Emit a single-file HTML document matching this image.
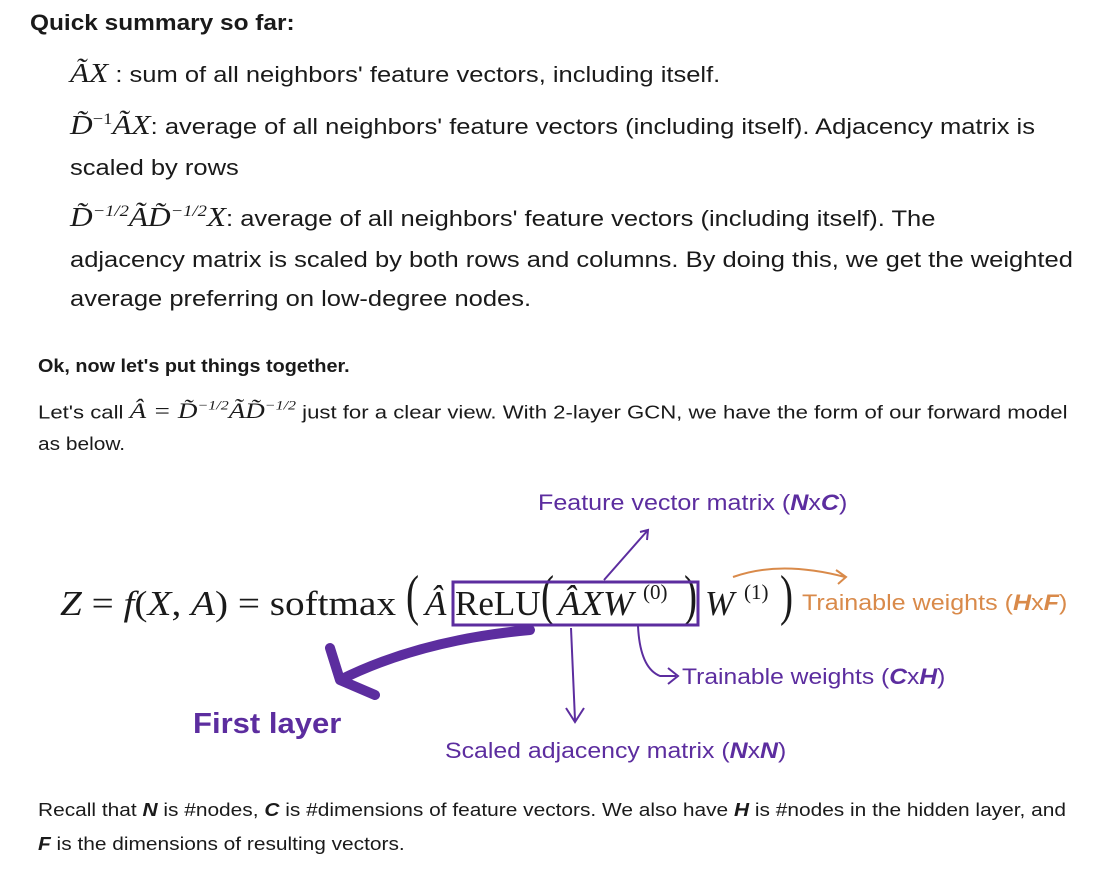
<!DOCTYPE html>
<html><head><meta charset="utf-8"><style>
body{margin:0;width:1096px;height:873px;background:#fff;position:relative;overflow:hidden;font-family:"Liberation Sans",sans-serif;color:#1a1a1a}
.a{position:absolute;white-space:nowrap;transform-origin:0 50%}
.m{font-family:"Liberation Serif",serif;font-style:italic}
.big{font-size:22px;transform:scaleX(1.16)}
.sm{font-size:18px;transform:scaleX(1.16)}
.p{color:#5c2d9f}
.o{color:#d98a4a}
.eq{font-family:"Liberation Serif",serif;font-size:35px}
.par{font-family:"Liberation Serif",serif;font-size:56px;transform:scaleX(0.7)}
</style></head><body>
<div class="a big" style="left:30px;top:10px;font-weight:bold;transform:scaleX(1.11)">Quick summary so far:</div>
<div class="a big" style="left:70px;top:58px"><span class="m" style="font-size:27px">ÃX</span> : sum of all neighbors' feature vectors, including itself.</div>
<div class="a big" style="left:70px;top:110px"><span class="m" style="font-size:27px">D̃<sup style="font-size:16px;font-style:normal">−1</sup>ÃX</span>: average of all neighbors' feature vectors (including itself). Adjacency matrix is</div>
<div class="a big" style="left:70px;top:155px">scaled by rows</div>
<div class="a big" style="left:70px;top:202px"><span class="m" style="font-size:27px">D̃<sup style="font-size:16px">−1/2</sup>ÃD̃<sup style="font-size:16px">−1/2</sup>X</span>: average of all neighbors' feature vectors (including itself). The</div>
<div class="a big" style="left:70px;top:247px">adjacency matrix is scaled by both rows and columns. By doing this, we get the weighted</div>
<div class="a big" style="left:70px;top:286px">average preferring on low-degree nodes.</div>
<div class="a sm" style="left:38px;top:356px;font-weight:bold;transform:scaleX(1.1)">Ok, now let's put things together.</div>
<div class="a sm" style="left:38px;top:398px;transform:scaleX(1.23)">Let's call <span class="m" style="font-size:22px">Â = D̃<sup style="font-size:13px">−1/2</sup>ÃD̃<sup style="font-size:13px">−1/2</sup></span> just for a clear view. With 2-layer GCN, we have the form of our forward model</div>
<div class="a sm" style="left:38px;top:434px">as below.</div>

<div class="a p" style="left:538px;top:490px;font-size:22px;transform:scaleX(1.14)">Feature vector matrix (<b><i>N</i></b>x<b><i>C</i></b>)</div>

<div class="a eq" style="left:60px;top:584px;transform:scaleX(1.12)"><i>Z</i> = <i>f</i>(<i>X</i>, <i>A</i>) = softmax</div>
<div class="a par" style="left:406px;top:564px">(</div>
<div class="a eq" style="left:425px;top:584px"><i>Â</i></div>
<div class="a eq" style="left:455px;top:584px;transform:scaleX(1.0)">ReLU</div>
<div class="a par" style="left:541px;top:564px">(</div>
<div class="a eq" style="left:558px;top:584px;transform:scaleX(1.05)"><i>ÂXW</i></div>
<div class="a" style="left:643px;top:580px;font-family:'Liberation Serif',serif;font-size:21px">(0)</div>
<div class="a par" style="left:684px;top:564px">)</div>
<div class="a eq" style="left:705px;top:584px"><i>W</i></div>
<div class="a" style="left:744px;top:580px;font-family:'Liberation Serif',serif;font-size:21px">(1)</div>
<div class="a par" style="left:780px;top:564px">)</div>

<div class="a o" style="left:802px;top:590px;font-size:22px;transform:scaleX(1.14)">Trainable weights (<b><i>H</i></b>x<b><i>F</i></b>)</div>
<div class="a p" style="left:682px;top:664px;font-size:22px;transform:scaleX(1.12)">Trainable weights (<b><i>C</i></b>x<b><i>H</i></b>)</div>
<div class="a p" style="left:193px;top:708px;font-size:29px;font-weight:bold;transform:scaleX(1.07)">First layer</div>
<div class="a p" style="left:445px;top:738px;font-size:22px;transform:scaleX(1.13)">Scaled adjacency matrix (<b><i>N</i></b>x<b><i>N</i></b>)</div>
<svg class="a" style="left:0;top:0" width="1096" height="873">
<rect x="453" y="582" width="245" height="43" fill="none" stroke="#5c2d9f" stroke-width="3"/>
<g fill="none" stroke="#5c2d9f" stroke-width="2">
<path d="M604 580 L648 530 M640 532 L648 530 L647 540"/>
<path d="M571 628 L575 720 M566 708 L575 722 L584 708"/>
<path d="M638 626 Q640 668 660 676 L676 676 M668 668 L678 676 L668 684"/>
</g>
<path d="M733 577 Q780 560 845 577 M836 570 L846 577 L838 584" fill="none" stroke="#d98a4a" stroke-width="2"/>
<path d="M530 630 Q420 640 340 680 M340 680 L330 648 M340 680 L375 695" fill="none" stroke="#5c2d9f" stroke-width="10" stroke-linecap="round"/>
</svg>
<div class="a sm" style="left:38px;top:800px">Recall that <b><i>N</i></b> is #nodes, <b><i>C</i></b> is #dimensions of feature vectors. We also have <b><i>H</i></b> is #nodes in the hidden layer, and</div>
<div class="a sm" style="left:38px;top:834px"><b><i>F</i></b> is the dimensions of resulting vectors.</div>
</body></html>
